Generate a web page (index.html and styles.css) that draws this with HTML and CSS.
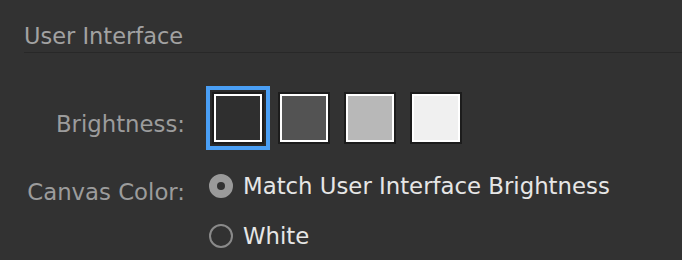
FILE: index.html
```html
<!DOCTYPE html>
<html lang="en">
<head>
  <meta charset="UTF-8">
  <title>Preferences - User Interface</title>
  <link rel="stylesheet" href="styles.css">
</head>
<body>
  <div class="panel">
    <h2 class="section-title">User Interface</h2>

    <div class="form-row brightness-row">
      <div class="field-label">Brightness:</div>
      <div class="swatches">
        <div class="swatch selected" style="background-color:#2f2f2f"></div>
        <div class="swatch" style="background-color:#535353"></div>
        <div class="swatch" style="background-color:#b8b8b8"></div>
        <div class="swatch" style="background-color:#f0f0f0"></div>
      </div>
    </div>

    <div class="form-row canvas-row">
      <div class="field-label">Canvas Color:</div>
      <div class="radio-group">
        <div class="radio-option">
          <span class="radio checked"></span>
          <span>Match User Interface Brightness</span>
        </div>
        <div class="radio-option">
          <span class="radio"></span>
          <span>White</span>
        </div>
      </div>
    </div>
  </div>
</body>
</html>
```

FILE: styles.css
```css
body {
  margin: 0;
  padding: 0;
  background-color: #323232;
  font-family: 'DejaVu Sans', 'Liberation Sans', sans-serif;
  overflow: hidden;
}

.panel {
  padding-left: 24px;
}

.section-title {
  margin: 0;
  padding: 23px 0 3px;
  font-size: 22.5px;
  font-weight: normal;
  line-height: 26px;
  color: #a2a2a2;
  border-bottom: 1px solid #282828;
}

.form-row {
  display: flex;
  align-items: flex-start;
}

.field-label {
  width: 161px;
  text-align: right;
  font-size: 22.8px;
  line-height: 26px;
  color: #9c9c9c;
}

.brightness-row {
  margin-top: 39px;
}

.brightness-row .field-label {
  margin-top: 19px;
}

.swatches {
  display: flex;
  gap: 14px;
  margin-left: 27px;
}

.swatch {
  width: 52px;
  height: 52px;
  box-sizing: border-box;
  border: 2px solid #1c1c1c;
  box-shadow: inset 0 0 0 2px #ffffff;
}

.swatch.selected {
  outline: 4px solid #4a9ff5;
  outline-offset: 2px;
  box-shadow: inset 0 0 0 2px #ffffff, 0 0 0 2px #2a2a2a;
}

.canvas-row {
  margin-top: 29px;
}

.canvas-row .field-label {
  margin-top: 6px;
}

.radio-group {
  display: flex;
  flex-direction: column;
  gap: 24px;
  margin-left: 24px;
}

.radio-option {
  display: flex;
  align-items: center;
  gap: 10px;
  font-size: 22.8px;
  line-height: 26px;
  color: #e6e6e6;
}

.radio {
  width: 24px;
  height: 24px;
  box-sizing: border-box;
  border-radius: 50%;
  border: 2px solid #8a8a8a;
  display: flex;
  align-items: center;
  justify-content: center;
}

.radio.checked {
  background-color: #9a9a9a;
  border-color: #9a9a9a;
}

.radio.checked::after {
  content: '';
  width: 8px;
  height: 8px;
  border-radius: 50%;
  background-color: #323232;
}
```
